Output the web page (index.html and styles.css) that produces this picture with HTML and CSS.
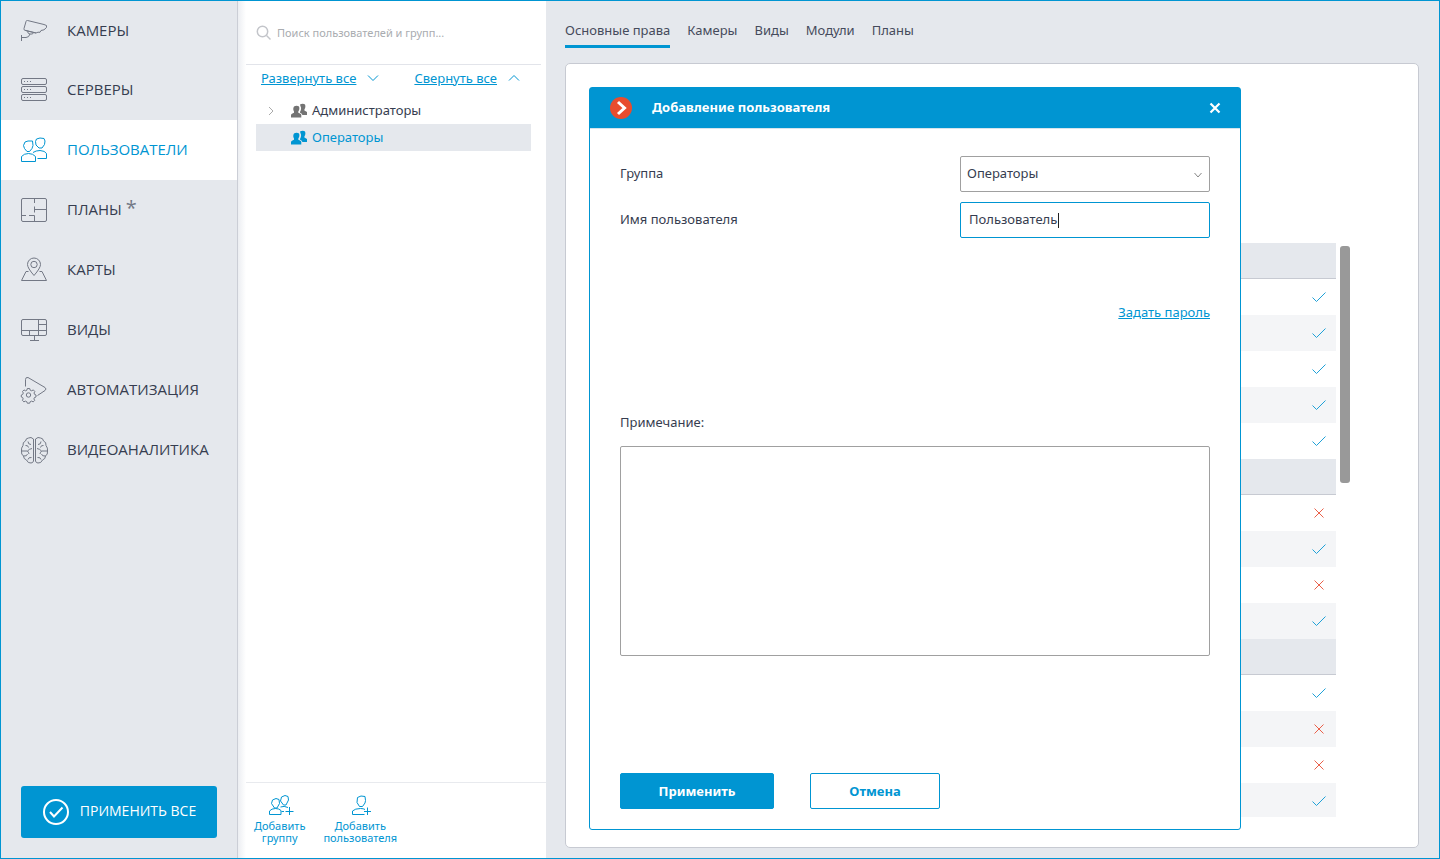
FILE: index.html
```html
<!DOCTYPE html>
<html lang="ru">
<head>
<meta charset="utf-8">
<title>Пользователи</title>
<link rel="stylesheet" href="styles.css">
</head>
<body>
<svg class="defs" aria-hidden="true">
  <symbol id="group" viewBox="0 0 16 15"><path d="M9 1.600c1.500-1.200 4-1.200 5 0 .7 1.400.5 3.400-.6 4.800v1.200l2.600 1.300V12h-4.600c-.4-1.200-1.400-1.800-2.400-2.200v-.9c1.200-1.600 1.500-4 .5-5.600ZM3 3.600c1.400-1.300 4-1.300 5 0 .7 1.500.5 3.400-.7 4.800v1.300c1.700.5 2.900 1.300 3 2.300v2.600H0V12c.2-1 1.500-1.800 3-2.300V8.400C2 7 2 5 3 3.600Z"/></symbol>
  <symbol id="yes" viewBox="0 0 16 12"><path d="M1.500 6.500 5.500 10.500 14.500 1.500"/></symbol>
  <symbol id="no" viewBox="0 0 12 12"><path d="M1.500 1.500 10.500 10.500M10.500 1.500 1.500 10.500"/></symbol>
</svg>
<div class="app">
  <nav class="sidebar">
    <div class="menu">
      <a class="item" href="#"><svg class="icon" viewBox="0 0 28 28"><path d="M6 4.500 4 11.500Q3.500 13 5 13.300L16 16 18 15.200 20 15.300 21 13.500 24 12.800 26.500 10.500V8.500L24 7.500 7.500 3.500Q6.300 3.300 6 4.500ZM5.500 13.500 16 16M7.500 14.500Q8 17 10 17H12.500L13.500 15.500M10 17Q9 20.500 6 20.500H1.500M1.500 18V24"/></svg><span>КАМЕРЫ</span></a>
      <a class="item" href="#"><svg class="icon" viewBox="0 0 28 28"><rect x="1.500" y="2.500" width="25" height="6" rx="1.500"/><rect x="1.500" y="10.500" width="25" height="6" rx="1.500"/><rect x="1.500" y="18.500" width="25" height="6" rx="1.500"/><path d="M4 5.500h1M7 5.500h1M10 5.500h1M4 13.500h1M7 13.500h1M10 13.500h1M4 21.500h1M7 21.500h1M10 21.500h1"/></svg><span>СЕРВЕРЫ</span></a>
      <a class="item active" href="#"><svg class="icon" viewBox="0 0 28 28"><path d="M5 6 8 5 12.500 5 13 9.500 12 12.500 9.500 15.500H7L4.500 12.500 3.500 9.500ZM16.500 3 20 2 24 2.500 25 5 24.500 8.500 22 12H19L16 9 15.500 5.500ZM1.500 25.500V20.500Q4 17.500 8.500 17.500T15.500 20.500V25.500ZM13 16.500Q16 14.500 20 14.500 25 14.800 26.500 17.500V22.500H17.500"/></svg><span>ПОЛЬЗОВАТЕЛИ</span></a>
      <a class="item" href="#"><svg class="icon" viewBox="0 0 28 28"><rect x="1.500" y="2.500" width="25" height="23" rx="1.500"/><path d="M14.500 2.500V7M14.500 10.500V16.500M14.500 13.500H26M1.500 19.500H6M9 19.500H14.500V25.500"/></svg><span>ПЛАНЫ <span class="star">*</span></span></a>
      <a class="item" href="#"><svg class="icon" viewBox="0 0 28 28"><path d="M14 19.500Q7.500 12 7.500 8.500A6.500 6.500 0 0 1 20.500 8.500Q20.500 12 14 19.500ZM8.500 15.500H6L1.500 24.500H26.500L22 15.500H19.500"/><circle cx="14" cy="8.500" r="3.200"/></svg><span>КАРТЫ</span></a>
      <a class="item" href="#"><svg class="icon" viewBox="0 0 28 28"><rect x="1.500" y="3.500" width="25" height="16" rx="1.500"/><path d="M18.500 3.500V19.500M18.500 8.500H26.500M1.500 14.500H26.500M9.500 14.500V19.500M14.500 19.500V24.500M10 24.500H19"/></svg><span>ВИДЫ</span></a>
      <a class="item" href="#"><svg class="icon" viewBox="0 0 28 28"><path d="M5.500 10.500V3.500Q5.500 1 8 1.500L25 11.500Q27 13 25 14.500L17.500 19.500"/><circle cx="8.500" cy="19" r="2.200"/><path d="M7.300 12.500h2.400l.5 1.700 1.500.6 1.600-.9 1.500 1.600-.8 1.500.6 1.400 1.400.6v2l-1.500.5-.6 1.400.8 1.500-1.500 1.500-1.600-.8-1.400.6-.5 1.500H7.300l-.5-1.500-1.400-.6-1.500.8-1.500-1.600.8-1.400-.6-1.400-1.300-.5v-2l1.400-.6.6-1.400-.8-1.500 1.500-1.600 1.500.9 1.400-.6Z"/></svg><span>АВТОМАТИЗАЦИЯ</span></a>
      <a class="item" href="#"><svg class="icon" viewBox="0 0 28 28"><path d="M13.500 3Q11 .5 8.500 2 6 2 5.500 5 2.500 6 3 9.500 1 12 1.500 15 1 18.500 3.500 20 3.500 23 6.500 24 8 27.500 11 27 13 27 13.500 25ZM15.500 3Q18 .5 20.500 2 23 2 23.500 5 26.500 6 26 9.500 28 12 27.500 15 28 18.500 25.500 20 25.500 23 22.500 24 21 27.500 18 27 16 27 15.500 25ZM8 5.500Q8 8.500 11 8.500M5.500 9.500Q8 9 8.500 11.500M1.500 15H7.500M7.500 15Q9 13 12 12.500M7.500 15Q9 17 9 18M3.500 20Q7 20.500 7.500 18M8 23.500Q8.500 21 11.500 21.500M21 5.500Q21 8.500 18 8.500M23.500 9.500Q21 9 20.500 11.500M27.500 15H21.500M21.500 15Q20 13 17 12.500M21.500 15Q20 17 20 18M25.500 20Q22 20.500 21.500 18M21 23.500Q20.500 21 17.500 21.500"/></svg><span>ВИДЕОАНАЛИТИКА</span></a>
    </div>
    <button class="apply-all" type="button"><svg viewBox="0 0 28 28"><circle cx="14" cy="14" r="12"/><path d="M8 14 12 18.500 20.500 9.500"/></svg><span>ПРИМЕНИТЬ ВСЕ</span></button>
  </nav>

  <aside class="groups">
    <label class="search"><svg viewBox="0 0 16 16"><circle cx="6.500" cy="6.500" r="5.200"/><path d="M10.500 10.500 14.500 14.500"/></svg><input type="text" placeholder="Поиск пользователей и групп..." aria-label="Поиск"></label>
    <div class="toggles">
      <a href="#">Развернуть все</a><svg class="chev" viewBox="0 0 12 8"><path d="M1 1.500 6 6.500 11 1.500"/></svg>
      <a href="#" class="collapse">Свернуть все</a><svg class="chev" viewBox="0 0 12 8"><path d="M1 6.500 6 1.500 11 6.500"/></svg>
    </div>
    <ul class="tree">
      <li class="node"><svg class="expand" viewBox="0 0 8 10"><path d="M2 1 6 5 2 9"/></svg><svg class="group"><use href="#group"/></svg><span>Администраторы</span></li>
      <li class="node selected"><span class="expand"></span><svg class="group"><use href="#group"/></svg><span>Операторы</span></li>
    </ul>
    <div class="actions">
      <button type="button"><svg viewBox="0 0 28 24"><path d="M4.500 6 8 4.500 11 5.500 11.500 9.500 9 14H6.500L3.500 9.500ZM13.500 3 17 1.500 20 2.500 20.500 6 18 11H15.500L12.500 7ZM13 20.500H1.500V17Q3.500 14.500 7.500 14.500 11 14.500 13 16.500V20.500M12.500 13Q16 11.500 20 13.500M13.500 17.500H16M21.500 13V21M17.500 17.500H25.500"/></svg><span>Добавить<br>группу</span></button>
      <button type="button"><svg viewBox="0 0 28 24"><path d="M9.500 3.500 13 2 17 2.500 17.500 6.500 17 9 14.500 12.500H11.500L9 8.500ZM16.500 20.500H4.500V17Q7 14.500 12.500 14.500 15.500 14.500 17 15.500M19.500 13.500V21M16 17.500H23"/></svg><span>Добавить<br>пользователя</span></button>
    </div>
  </aside>

  <main class="main">
    <div class="tabs">
      <a class="tab current" href="#">Основные права</a><a class="tab" href="#">Камеры</a><a class="tab" href="#">Виды</a><a class="tab" href="#">Модули</a><a class="tab" href="#">Планы</a>
    </div>
    <section class="panel">
      <div class="rights">
        <table>
          <tbody>
            <tr class="section"><td></td><td></td></tr>
            <tr><td></td><td><svg class="yes"><use href="#yes"/></svg></td></tr>
            <tr class="alt"><td></td><td><svg class="yes"><use href="#yes"/></svg></td></tr>
            <tr><td></td><td><svg class="yes"><use href="#yes"/></svg></td></tr>
            <tr class="alt"><td></td><td><svg class="yes"><use href="#yes"/></svg></td></tr>
            <tr><td></td><td><svg class="yes"><use href="#yes"/></svg></td></tr>
            <tr class="section"><td></td><td></td></tr>
            <tr><td></td><td><svg class="no"><use href="#no"/></svg></td></tr>
            <tr class="alt"><td></td><td><svg class="yes"><use href="#yes"/></svg></td></tr>
            <tr><td></td><td><svg class="no"><use href="#no"/></svg></td></tr>
            <tr class="alt"><td></td><td><svg class="yes"><use href="#yes"/></svg></td></tr>
            <tr class="section"><td></td><td></td></tr>
            <tr><td></td><td><svg class="yes"><use href="#yes"/></svg></td></tr>
            <tr class="alt"><td></td><td><svg class="no"><use href="#no"/></svg></td></tr>
            <tr><td></td><td><svg class="no"><use href="#no"/></svg></td></tr>
            <tr class="alt"><td></td><td><svg class="yes"><use href="#yes"/></svg></td></tr>
          </tbody>
        </table>
      </div>
      <div class="scroll"><div class="thumb"></div></div>

      <form class="dialog" role="dialog" aria-labelledby="title">
        <header class="dialog-head">
          <svg class="logo" viewBox="0 0 22 22"><circle cx="11" cy="11" r="11"/><path d="M8 5 14.500 11 8 17"/></svg>
          <h1 id="title">Добавление пользователя</h1>
          <button class="close" type="button" aria-label="Закрыть"><svg viewBox="0 0 12 12"><path d="M1.500 1.500 10.500 10.500M10.500 1.500 1.500 10.500"/></svg></button>
        </header>
        <div class="dialog-body">
          <div class="field"><label for="grp">Группа</label><div class="control"><select id="grp"><option>Операторы</option></select><svg class="arrow" viewBox="0 0 10 8"><path d="M1.500 2 5 6 8.500 2"/></svg></div></div>
          <div class="field"><label for="name">Имя пользователя</label><div class="control"><input id="name" type="text" value="Пользователь"><span class="caret"></span></div></div>
          <a class="password" href="#">Задать пароль</a>
          <label class="note-label" for="note">Примечание:</label>
          <textarea id="note"></textarea>
          <div class="buttons"><button class="primary" type="submit">Применить</button><button class="secondary" type="button">Отмена</button></div>
        </div>
      </form>
    </section>
  </main>
</div>
</body>
</html>
```
FILE: styles.css
```css
* { box-sizing: border-box; }
body { margin: 0; font: 13px/20px "Noto Sans", "Open Sans", sans-serif; color: #363d50; }
a { color: #0095d2; }
svg { fill: none; stroke: currentColor; flex: none; }
button, input, select, textarea { font: inherit; color: inherit; }
button { cursor: pointer; }
.defs { position: absolute; width: 0; height: 0; }

.app { display: flex; height: 100vh; border: 1px solid #0095d2; background: #e5e8ed; }

.sidebar { width: 237px; flex: none; display: flex; flex-direction: column; justify-content: space-between; border-right: 1px solid #cbced6; }
.menu { display: flex; flex-direction: column; }
.item { display: flex; align-items: center; gap: 19px; height: 60px; padding: 0 19px; color: #363d50; text-decoration: none; font: 15px/20px "Open Sans", sans-serif; }
.item:first-child { height: 59px; }
.item > span { padding-bottom: 2px; }
.item.active { background: #fff; color: #0095d2; }
.icon { width: 28px; height: 28px; color: #737885; }
.active .icon { color: #0095d2; }
.star { color: #737885; font-size: 20px; line-height: 16px; }
.apply-all { display: flex; align-items: center; justify-content: center; gap: 10px; height: 52px; margin: 0 20px 20px; padding: 0; border: 0; border-radius: 3px; background: #0095d2; color: #fff; font: 14px/20px "Open Sans", sans-serif; }
.apply-all span { padding-bottom: 2px; }
.apply-all svg { width: 28px; height: 28px; stroke-width: 2; }

.groups { width: 308px; flex: none; display: flex; flex-direction: column; padding-left: 8px; background: linear-gradient(to right, #eceef2, #fff 8px); }
.search { display: flex; align-items: center; gap: 5px; height: 64px; margin-right: 5px; padding-left: 10px; border-bottom: 1px solid #e2e4ea; color: #c3c5ca; }
.search svg { width: 16px; height: 16px; stroke-width: 1.5; }
.search input { flex: 1; min-width: 0; border: 0; padding: 0; background: none; outline: 0; font-size: 11px; }
.search input::placeholder { color: #a9acb0; opacity: 1; }
.toggles { display: flex; align-items: center; padding: 3px 0 0 15px; }
.chev { width: 12px; height: 8px; margin-left: 11px; color: #0095d2; }
.collapse { margin-left: 35px; }
.tree { list-style: none; flex: 1; margin: 9px 15px 0 10px; padding: 0; }
.node { display: flex; align-items: center; height: 27px; padding-left: 11px; }
.node > span { padding-bottom: 1px; }
.node .expand { width: 8px; height: 10px; margin-right: 16px; padding: 0; color: #aaa; }
.node .group { width: 16px; height: 15px; margin-right: 5px; fill: #737373; stroke: none; }
.node.selected { background: #e5e8ed; color: #0095d2; }
.node.selected .group { fill: #0095d2; }
.actions { display: flex; gap: 18px; height: 76px; padding: 11px 8px 0; border-top: 1px solid #e8eaee; }
.actions button { display: flex; flex-direction: column; align-items: center; border: 0; padding: 0; background: none; color: #0095d2; font-size: 11px; line-height: 12px; }
.actions svg { width: 28px; height: 24px; margin: 0 0 2px 4px; }

.main { flex: 1; min-width: 0; display: flex; flex-direction: column; padding: 18px 20px 10px 19px; }
.tabs { display: flex; gap: 17px; height: 44px; }
.tab { height: 29px; color: #454b5c; text-decoration: none; line-height: 22px; }
.tab.current { border-bottom: 3px solid #0095d2; }
.panel { position: relative; flex: 1; display: flex; padding: 179px 68px 30px 24px; border: 1px solid #c7cad2; border-radius: 5px; background: #fff; }
.rights { flex: 1; overflow: hidden; height: 574px; }
table { width: 100%; border-spacing: 0; }
td { height: 36px; padding: 0 9px; text-align: right; line-height: 0; }
.alt { background: #f4f5f7; }
.section td { background: #e5e8ed; border-bottom: 1px solid #c7cad2; }
td .yes { width: 16px; height: 12px; stroke: #1fa1d8; }
td .no { width: 12px; height: 12px; margin-right: 2px; stroke: #ea6049; }
.scroll { width: 14px; padding: 3px 0 0 4px; }
.thumb { height: 237px; border-radius: 3px; background: #999; }

.dialog { position: absolute; top: 23px; left: 23px; width: 652px; border: 1px solid #0095d2; border-radius: 3px; background: #fff; }
.dialog-head { display: flex; align-items: center; height: 41px; padding: 0 19px 0 20px; background: #0095d2; color: #fff; border-bottom: 1px solid #d5e4ec; }
.logo { width: 22px; height: 22px; }
.logo circle { fill: #e84c2e; stroke: none; }
.logo path { stroke-width: 3; }
h1 { flex: 1; margin: 0 0 0 20px; padding-bottom: 2px; font: 700 13px/20px "Noto Sans", sans-serif; }
.close { display: flex; border: 0; padding: 0; background: none; color: #fff; }
.close svg { width: 12px; height: 12px; stroke-width: 2.2; }
.dialog-body { display: flex; flex-direction: column; padding: 27px 30px 20px; }
.field { display: flex; justify-content: space-between; margin-bottom: 10px; }
.field label { line-height: 34px; }
.control { position: relative; width: 250px; }
.control select, .control input { width: 100%; height: 36px; border: 1px solid #a0a0a0; border-radius: 2px; background: #fff; appearance: none; outline: 0; }
.control select { padding: 0 6px 2px; }
.control input { padding: 0 8px 2px; border-color: #0095d2; }
.arrow { position: absolute; right: 7px; top: 15px; width: 10px; height: 8px; color: #888; pointer-events: none; }
.caret { position: absolute; left: 98px; top: 11px; width: 1px; height: 15px; background: #222; }
.password { align-self: flex-end; margin-top: 54px; }
.note-label { margin: 90px 0 14px; }
textarea { height: 210px; border: 1px solid #a0a0a0; border-radius: 2px; resize: none; outline: 0; }
.buttons { display: flex; gap: 36px; margin-top: 117px; }
.buttons button { height: 36px; border: 1px solid #0095d2; border-radius: 2px; font-weight: 700; }
.buttons .primary { width: 154px; background: #0095d2; color: #fff; }
.buttons .secondary { width: 130px; background: #fff; color: #0095d2; }
```
